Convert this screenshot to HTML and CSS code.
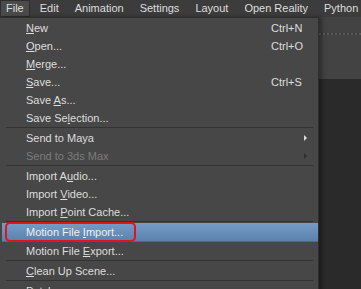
FILE: index.html
```html
<!DOCTYPE html>
<html lang="en">
<head>
  <meta charset="UTF-8">
  <title>File Menu</title>
  <link rel="stylesheet" href="styles.css">
</head>
<body>
  <div class="menubar">
    <span class="top-item active">File</span>
    <span class="top-item">Edit</span>
    <span class="top-item">Animation</span>
    <span class="top-item">Settings</span>
    <span class="top-item">Layout</span>
    <span class="top-item">Open Reality</span>
    <span class="top-item">Python</span>
  </div>

  <div class="workspace">
    <div class="dropdown">
      <div class="item"><span class="label"><u>N</u>ew</span><span class="key">Ctrl+N</span></div>
      <div class="item"><span class="label"><u>O</u>pen...</span><span class="key">Ctrl+O</span></div>
      <div class="item"><span class="label"><u>M</u>erge...</span></div>
      <div class="item"><span class="label"><u>S</u>ave...</span><span class="key">Ctrl+S</span></div>
      <div class="item"><span class="label">Save <u>A</u>s...</span></div>
      <div class="item"><span class="label">Save Se<u>l</u>ection...</span></div>
      <div class="sep"></div>
      <div class="item"><span class="label">Send to Maya</span><span class="arrow"></span></div>
      <div class="item disabled"><span class="label">Send to 3ds Max</span><span class="arrow"></span></div>
      <div class="sep"></div>
      <div class="item"><span class="label">Import A<u>u</u>dio...</span></div>
      <div class="item"><span class="label">Import <u>V</u>ideo...</span></div>
      <div class="item"><span class="label">Import <u>P</u>oint Cache...</span></div>
      <div class="sep"></div>
      <div class="item selected"><span class="label">Motion File <u>I</u>mport...</span><span class="mark"></span></div>
      <div class="item"><span class="label">Motion File <u>E</u>xport...</span></div>
      <div class="sep"></div>
      <div class="item"><span class="label"><u>C</u>lean Up Scene...</span></div>
      <div class="sep"></div>
      <div class="item"><span class="label"><u>P</u>atch</span></div>
    </div>
    <div class="backdrop">
      <div class="toolstrip"><div class="dots"></div></div>
      <div class="viewer"></div>
    </div>
  </div>
</body>
</html>
```

FILE: styles.css
```css
body {
  margin: 0;
  background: #2a2a2a;
  font-family: "Liberation Sans", Arial, sans-serif;
  font-size: 11px;
  color: #dedede;
  height: 289px;
  overflow: hidden;
}

.menubar {
  display: flex;
  height: 17px;
  background: #3c3c3c;
  overflow: hidden;
}

.top-item {
  flex-shrink: 0;
  white-space: nowrap;
  padding: 0 6px;
  margin-right: 4px;
  line-height: 17px;
}

.top-item.active {
  background: #4b4b4b;
  box-shadow: inset 0 0 0 1px #2e2e2e;
}

.workspace {
  display: flex;
}

.dropdown {
  width: 318px;
  flex-shrink: 0;
  background: #474747;
  border-top: 1px solid #2f2f2f;
  border-right: 1px solid #2f2f2f;
  padding-top: 1px;
  box-shadow: 3px 0 4px rgba(0,0,0,0.35);
  position: relative;
  z-index: 1;
}

.item {
  position: relative;
  display: flex;
  align-items: center;
  height: 18px;
  padding-left: 26px;
  white-space: nowrap;
}

.item u {
  text-decoration-thickness: 1px;
  text-underline-offset: 1px;
}

.label {
  flex: 1;
}

.key {
  width: 47px;
}

.arrow {
  width: 0;
  height: 0;
  margin-right: 11px;
  border-top: 3px solid transparent;
  border-bottom: 3px solid transparent;
  border-left: 3px solid #dcdcdc;
}

.disabled {
  color: #7c7c7c;
}

.disabled .arrow {
  border-left-color: #2f2f2f;
}

.selected {
  margin-left: 2px;
  padding-left: 24px;
  background: linear-gradient(#759bc7, #5b81ad);
  border-bottom: 1px solid #4a6a92;
  color: #f0f0f0;
}

.mark {
  position: absolute;
  left: 3px;
  top: -1px;
  width: 127px;
  height: 16px;
  border: 2px solid #e3121c;
  border-radius: 5px;
}

.sep {
  height: 1px;
  margin: 0 5px 1px 6px;
  background: #333333;
}

.backdrop {
  flex: 1;
  display: flex;
  flex-direction: column;
}

.toolstrip {
  height: 62px;
  background: #434343;
  padding-top: 16px;
  box-sizing: border-box;
}

.dots {
  height: 2px;
  background: repeating-linear-gradient(90deg, #5c5c5c 0 2px, #383838 2px 4px);
}

.viewer {
  flex: 1;
  background: #2a2a2a;
}
```
